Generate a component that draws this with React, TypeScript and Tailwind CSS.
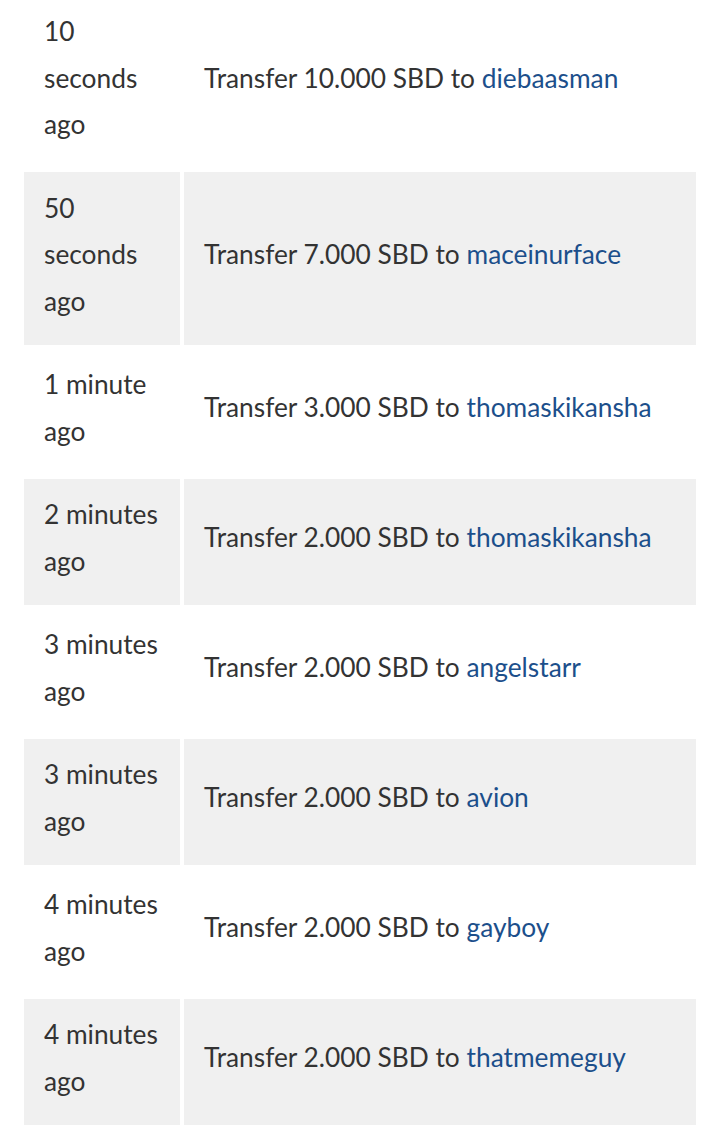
import React from "react";

type Row = { time: string[]; amount: string; to: string };

const rows: Row[] = [
  { time: ["10", "seconds", "ago"], amount: "10.000", to: "diebaasman" },
  { time: ["50", "seconds", "ago"], amount: "7.000", to: "maceinurface" },
  { time: ["1 minute", "ago"], amount: "3.000", to: "thomaskikansha" },
  { time: ["2 minutes", "ago"], amount: "2.000", to: "thomaskikansha" },
  { time: ["3 minutes", "ago"], amount: "2.000", to: "angelstarr" },
  { time: ["3 minutes", "ago"], amount: "2.000", to: "avion" },
  { time: ["4 minutes", "ago"], amount: "2.000", to: "gayboy" },
  { time: ["4 minutes", "ago"], amount: "2.000", to: "thatmemeguy" },
];

export default function App() {
  return (
    <div className="min-h-[1128px] overflow-hidden bg-white">
      <div className="mt-[-4.5px] grid grid-cols-[156px_1fr] gap-1 px-6 font-['Lato',sans-serif] text-[26.3px] leading-[46.5px] text-[#333333]">
        {rows.map((r, i) => {
          const bg = i % 2 === 1 ? "bg-[#f0f0f0]" : "bg-white";
          return (
            <React.Fragment key={i}>
              <div className={`${bg} px-5 pt-[12.5px] pb-[20.5px]`}>
                {r.time.map((t, j) => (
                  <div key={j} className="whitespace-nowrap">
                    {t}
                  </div>
                ))}
              </div>
              <div className={`${bg} flex items-center px-5 pt-[12.5px] pb-[20.5px]`}>
                <span className="whitespace-nowrap">
                  Transfer {r.amount} SBD to{" "}
                  <a className="text-[#1c4f8b]" href="#">
                    {r.to}
                  </a>
                </span>
              </div>
            </React.Fragment>
          );
        })}
      </div>
    </div>
  );
}
